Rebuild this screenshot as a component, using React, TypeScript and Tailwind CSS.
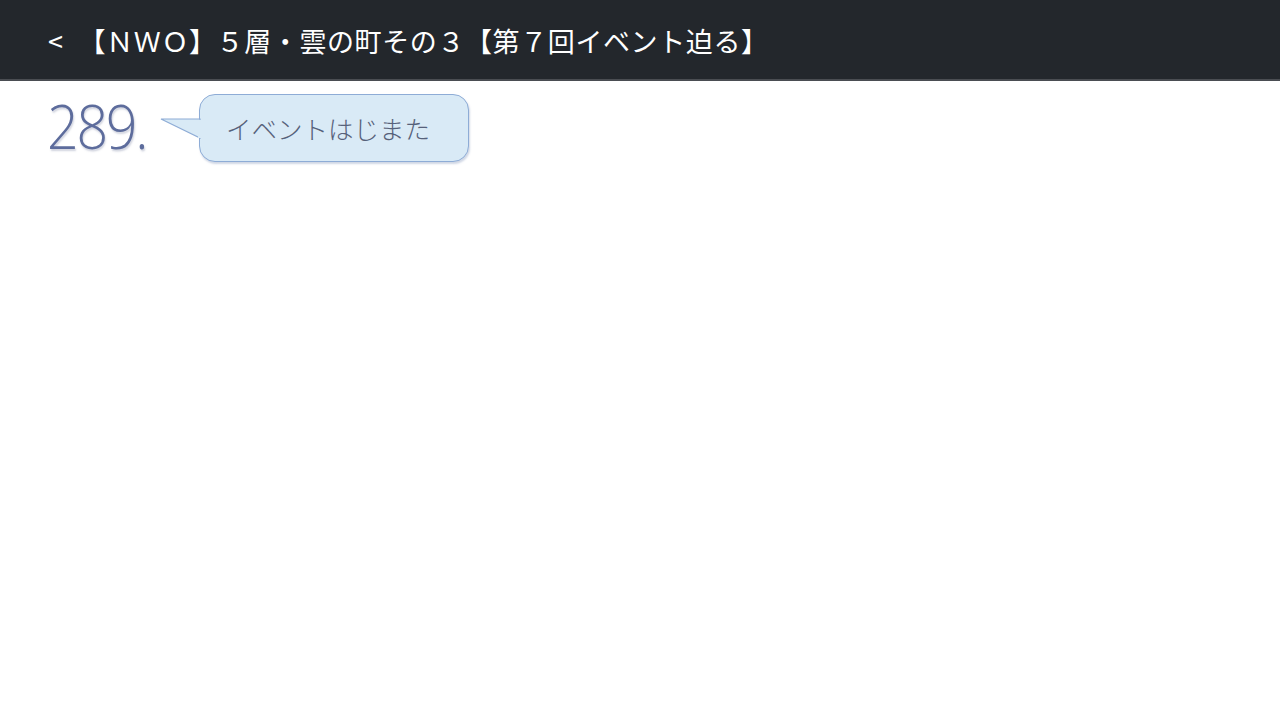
export default function App() {
  return (
    <div className="w-[1280px] h-[720px] bg-white overflow-hidden" style={{ fontFamily: '"Noto Sans CJK JP", "Noto Sans", sans-serif' }}>
      <header className="h-[81px] bg-[#23272c] border-b-2 border-[#4a4d52] flex items-center pl-[48px] pt-[2px]">
        <h1 className="text-white text-[27px] font-normal tracking-[0.6px] leading-none flex items-center" style={{ fontFamily: '"Noto Sans CJK JP", sans-serif' }}>
          <span className="mr-[15px]">&lt;</span>
          <span>【ＮＷＯ】５層・雲の町その３【第７回イベント迫る】</span>
        </h1>
      </header>
      <div className="flex items-start pl-[47px] pt-[13px]">
        <div className="w-[152px] shrink-0">
          <div className="inline-block origin-left scale-x-[0.91] text-[61px] leading-none font-light text-[#5d6c9c] tracking-[-2.5px] mt-[1px]" style={{ fontFamily: '"Open Sans", sans-serif', textShadow: '1px 2px 2px rgba(120,130,160,0.35)' }}>289.</div>
        </div>
        <div className="relative">
          <svg className="absolute left-[-39px] top-[23px]" width="41" height="22" viewBox="0 0 41 22">
            <polygon points="1,2 40,2 40,21" fill="#d9eaf6" stroke="#8eacd6" strokeWidth="1.2" />
            <rect x="38" y="3" width="3" height="18" fill="#d9eaf6" />
          </svg>
          <div className="w-[270px] h-[68px] rounded-[16px] border border-[#8eacd6] bg-[#d9eaf6] flex items-center pl-[26px] text-[25.5px] font-light text-[#56617a] shadow-[1px_2px_2px_rgba(120,140,180,0.35)]">
            イベントはじまた
          </div>
        </div>
      </div>
    </div>
  );
}
